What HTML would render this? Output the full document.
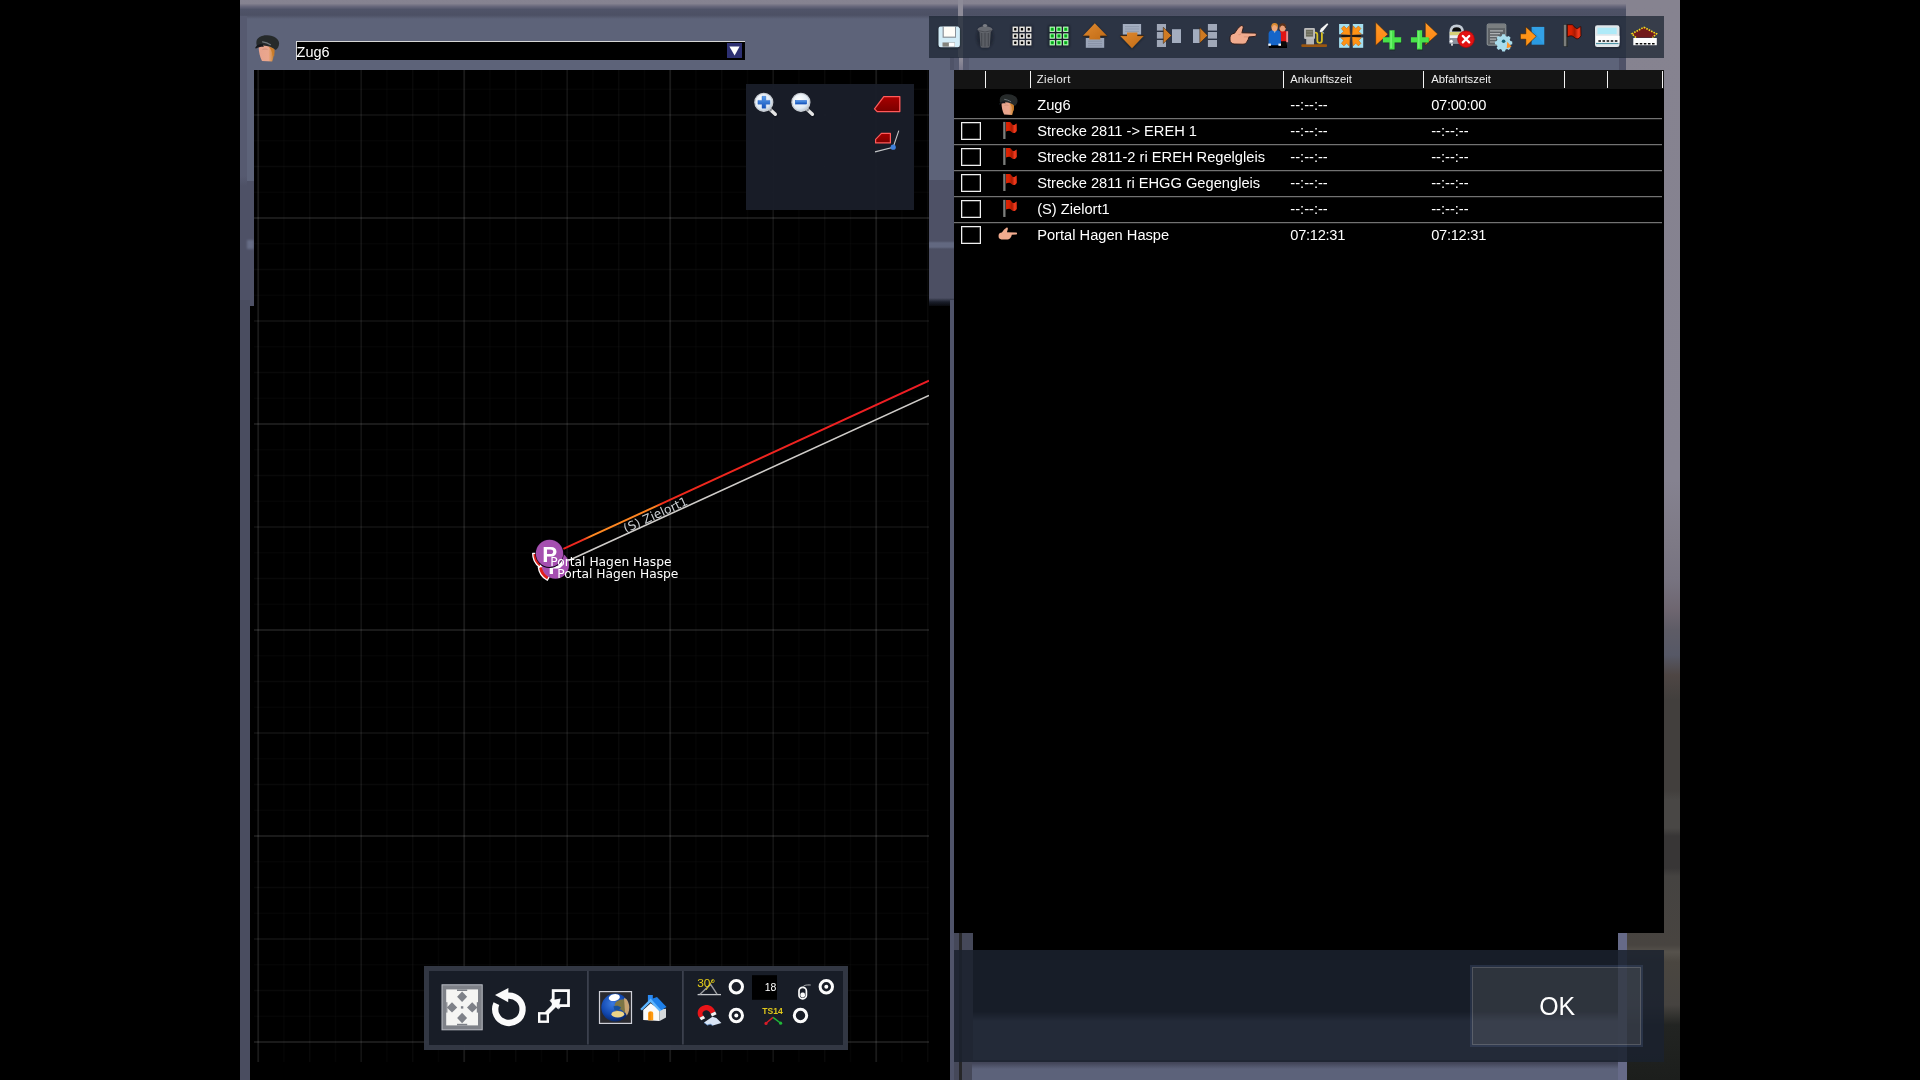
<!DOCTYPE html>
<html lang="de">
<head>
<meta charset="utf-8">
<title>Fahrplan - Zug6</title>
<style>
html,body{margin:0;padding:0;background:#000;}
body{width:1920px;height:1080px;position:relative;overflow:hidden;font-family:"Liberation Sans",sans-serif;color:#fff;}
.abs{position:absolute;}
.gl{will-change:transform;}
#scene{left:240px;top:0;width:1440px;height:1080px;background:linear-gradient(180deg,#868390 0px,#858290 480px,#7e7a86 540px,#777380 580px,#6e6670 610px,#5e5c66 630px,#565866 655px,#4e4644 675px,#423f3d 700px,#423f3d 790px,#494745 800px,#494745 828px,#383636 836px,#383636 868px,#454341 876px,#484440 945px,#56524c 952px,#4a4640 962px,#464340 1005px,#222422 1025px,#1c1e1c 1080px);}
#lwin{left:240px;top:0;width:714px;height:1080px;background:#5d6379;}
#rwin{left:954px;top:0;width:672px;height:1080px;background:#5d6379;}
.topband{left:0;top:0;width:100%;height:20px;background:linear-gradient(180deg,#868391 0px,#858290 3.500px,#67677b 6.500px,#4f5368 9.500px,#4c5064 15px,#5d6379 19px);}
#map{left:254px;top:70px;width:675px;height:992px;background:#000;overflow:hidden;}
#lblack{left:250px;top:306px;width:700px;height:774px;background:#000;}
#rstrip{left:950px;top:300px;width:4px;height:780px;background:#50546a;}
#table{left:954px;top:70px;width:710px;height:863px;background:#000;}
#table2{left:973px;top:933px;width:645px;height:88px;background:linear-gradient(180deg,#000 0,#000 78px,rgba(0,0,0,0) 88px);}
#thead{left:0;top:0;width:710px;height:18.600px;background:#141414;}
.sep{top:1px;width:1.600px;height:17px;background:#f4f4f4;}
.th{top:0;height:18.600px;line-height:19px;font-size:11.300px;color:#f0f0f0;white-space:nowrap;}
.row{left:0;width:708px;height:26px;line-height:26.400px;font-size:14.670px;white-space:nowrap;color:#fff;}
.row span{position:absolute;top:0;}
.rl{left:0;width:708px;height:2px;background:linear-gradient(180deg,#727272 0,#727272 1px,#1a1a1a 1px,#1a1a1a 2px);}
.cb{left:6.900px;width:20.200px;height:18.400px;box-sizing:border-box;border:1px solid #f0f0f0;box-shadow:inset 0 0 0 .5px rgba(240,240,240,.55);}
#toolbar{left:929px;top:16px;width:735px;height:41.500px;background:rgba(27,36,50,.74);}
#botbar{left:954px;top:950px;width:710px;height:112px;background:rgba(26,33,46,.87);}
#ok{left:1469.800px;top:964.800px;width:173.400px;height:81.600px;box-sizing:border-box;border:2px solid rgba(100,125,180,.2);background:rgba(255,255,255,.1);background-clip:padding-box;}
#ok i{position:absolute;left:0;top:0;right:0;bottom:0;border:1.200px solid rgba(255,255,255,.17);}
#ok b{position:absolute;left:-2px;top:-2px;width:173.400px;height:81.600px;line-height:82.500px;text-align:center;font-weight:normal;font-size:24.900px;color:#fff;text-indent:1px;}
#dd{left:295.500px;top:41px;width:448.800px;height:19px;background:#000;border-top:1px solid #d6d6d6;border-left:1px solid #d6d6d6;box-sizing:border-box;}
#dd span{position:absolute;left:-0.400px;top:0;line-height:20.200px;font-size:14.450px;color:#fff;}
#ddb{left:727px;top:43.300px;width:15px;height:14.700px;background:#2d3072;}
#btb{left:424px;top:966px;width:424px;height:84px;background:rgba(52,57,70,.96);}
#btb .in{left:5px;top:5px;width:414px;height:73.500px;background:#181d27;}
#zp{left:746px;top:84px;width:168px;height:126px;background:rgba(25,30,41,.94);}
</style>
</head>
<body>
<div id="scene" class="abs"></div>
<div id="lwin" class="abs"><div class="abs topband"></div></div>
<div id="rwin" class="abs"><div class="abs topband"></div></div>
<div class="abs" style="left:240px;top:16px;width:7px;height:1064px;background:linear-gradient(180deg,#565a70 0,#565a70 160px,#4e5166 170px)"></div>
<div class="abs" style="left:247px;top:181px;width:7px;height:130px;background:#4e5166"></div>
<div class="abs" style="left:247px;top:240px;width:7px;height:9px;background:#676d86;filter:blur(1px)"></div>
<div class="abs" style="left:240px;top:300px;width:10px;height:780px;background:#4a4d60"></div>
<div class="abs" style="left:929px;top:180px;width:25px;height:130px;background:linear-gradient(180deg,#4e5166 0,#4e5166 61px,#626880 63px,#626880 67px,#4c4f63 69px,#4c4f63 118px,#1a1e2a 122px,#000 128px)"></div>
<div class="abs" style="left:950px;top:57px;width:8px;height:13px;background:#4f5368"></div>
<div class="abs" style="left:958px;top:0;width:5px;height:70px;background:linear-gradient(180deg,#8d8b98 0,#8d8b98 60px,#77768a 70px)"></div>
<div class="abs" style="left:954px;top:57px;width:5px;height:13px;background:#565a70"></div>
<div class="abs" style="left:963px;top:57px;width:6px;height:13px;background:#565a70"></div>
<div class="abs" style="left:1619px;top:57px;width:7px;height:13px;background:#4f5268"></div>
<div class="abs" style="left:954px;top:930px;width:19px;height:150px;background:#454859"></div>
<div class="abs" style="left:959.300px;top:930px;width:3.100px;height:150px;background:#262628"></div>
<div class="abs" style="left:971.500px;top:1060px;width:647px;height:20px;background:linear-gradient(180deg,#434659 0,#434659 3px,#5c627a 9px)"></div>
<div class="abs" style="left:1618px;top:930px;width:9px;height:150px;background:#666a88"></div>

<div id="lblack" class="abs"></div>
<div id="rstrip" class="abs"></div>
<div id="map" class="abs"><svg class="abs" style="left:0;top:0" width="675" height="992" viewBox="0 0 675 992"><line x1="4.20" y1="0" x2="4.20" y2="992" stroke="#fff" stroke-opacity="0.1" stroke-width="1.8"/><line x1="29.95" y1="0" x2="29.95" y2="992" stroke="#fff" stroke-opacity="0.02" stroke-width="1.5"/><line x1="55.70" y1="0" x2="55.70" y2="992" stroke="#fff" stroke-opacity="0.036" stroke-width="1.5"/><line x1="81.45" y1="0" x2="81.45" y2="992" stroke="#fff" stroke-opacity="0.02" stroke-width="1.5"/><line x1="107.20" y1="0" x2="107.20" y2="992" stroke="#fff" stroke-opacity="0.075" stroke-width="1.7"/><line x1="132.95" y1="0" x2="132.95" y2="992" stroke="#fff" stroke-opacity="0.02" stroke-width="1.5"/><line x1="158.70" y1="0" x2="158.70" y2="992" stroke="#fff" stroke-opacity="0.036" stroke-width="1.5"/><line x1="184.45" y1="0" x2="184.45" y2="992" stroke="#fff" stroke-opacity="0.02" stroke-width="1.5"/><line x1="210.20" y1="0" x2="210.20" y2="992" stroke="#fff" stroke-opacity="0.1" stroke-width="1.8"/><line x1="235.95" y1="0" x2="235.95" y2="992" stroke="#fff" stroke-opacity="0.02" stroke-width="1.5"/><line x1="261.70" y1="0" x2="261.70" y2="992" stroke="#fff" stroke-opacity="0.036" stroke-width="1.5"/><line x1="287.45" y1="0" x2="287.45" y2="992" stroke="#fff" stroke-opacity="0.02" stroke-width="1.5"/><line x1="313.20" y1="0" x2="313.20" y2="992" stroke="#fff" stroke-opacity="0.075" stroke-width="1.7"/><line x1="338.95" y1="0" x2="338.95" y2="992" stroke="#fff" stroke-opacity="0.02" stroke-width="1.5"/><line x1="364.70" y1="0" x2="364.70" y2="992" stroke="#fff" stroke-opacity="0.036" stroke-width="1.5"/><line x1="390.45" y1="0" x2="390.45" y2="992" stroke="#fff" stroke-opacity="0.02" stroke-width="1.5"/><line x1="416.20" y1="0" x2="416.20" y2="992" stroke="#fff" stroke-opacity="0.1" stroke-width="1.8"/><line x1="441.95" y1="0" x2="441.95" y2="992" stroke="#fff" stroke-opacity="0.02" stroke-width="1.5"/><line x1="467.70" y1="0" x2="467.70" y2="992" stroke="#fff" stroke-opacity="0.036" stroke-width="1.5"/><line x1="493.45" y1="0" x2="493.45" y2="992" stroke="#fff" stroke-opacity="0.02" stroke-width="1.5"/><line x1="519.20" y1="0" x2="519.20" y2="992" stroke="#fff" stroke-opacity="0.075" stroke-width="1.7"/><line x1="544.95" y1="0" x2="544.95" y2="992" stroke="#fff" stroke-opacity="0.02" stroke-width="1.5"/><line x1="570.70" y1="0" x2="570.70" y2="992" stroke="#fff" stroke-opacity="0.036" stroke-width="1.5"/><line x1="596.45" y1="0" x2="596.45" y2="992" stroke="#fff" stroke-opacity="0.02" stroke-width="1.5"/><line x1="622.20" y1="0" x2="622.20" y2="992" stroke="#fff" stroke-opacity="0.1" stroke-width="1.8"/><line x1="647.95" y1="0" x2="647.95" y2="992" stroke="#fff" stroke-opacity="0.02" stroke-width="1.5"/><line x1="673.70" y1="0" x2="673.70" y2="992" stroke="#fff" stroke-opacity="0.036" stroke-width="1.5"/><line x1="0" y1="19.25" x2="675" y2="19.25" stroke="#fff" stroke-opacity="0.02" stroke-width="1.5"/><line x1="0" y1="45.00" x2="675" y2="45.00" stroke="#fff" stroke-opacity="0.075" stroke-width="1.7"/><line x1="0" y1="70.75" x2="675" y2="70.75" stroke="#fff" stroke-opacity="0.02" stroke-width="1.5"/><line x1="0" y1="96.50" x2="675" y2="96.50" stroke="#fff" stroke-opacity="0.036" stroke-width="1.5"/><line x1="0" y1="122.25" x2="675" y2="122.25" stroke="#fff" stroke-opacity="0.02" stroke-width="1.5"/><line x1="0" y1="148.00" x2="675" y2="148.00" stroke="#fff" stroke-opacity="0.1" stroke-width="1.8"/><line x1="0" y1="173.75" x2="675" y2="173.75" stroke="#fff" stroke-opacity="0.02" stroke-width="1.5"/><line x1="0" y1="199.50" x2="675" y2="199.50" stroke="#fff" stroke-opacity="0.036" stroke-width="1.5"/><line x1="0" y1="225.25" x2="675" y2="225.25" stroke="#fff" stroke-opacity="0.02" stroke-width="1.5"/><line x1="0" y1="251.00" x2="675" y2="251.00" stroke="#fff" stroke-opacity="0.075" stroke-width="1.7"/><line x1="0" y1="276.75" x2="675" y2="276.75" stroke="#fff" stroke-opacity="0.02" stroke-width="1.5"/><line x1="0" y1="302.50" x2="675" y2="302.50" stroke="#fff" stroke-opacity="0.036" stroke-width="1.5"/><line x1="0" y1="328.25" x2="675" y2="328.25" stroke="#fff" stroke-opacity="0.02" stroke-width="1.5"/><line x1="0" y1="354.00" x2="675" y2="354.00" stroke="#fff" stroke-opacity="0.1" stroke-width="1.8"/><line x1="0" y1="379.75" x2="675" y2="379.75" stroke="#fff" stroke-opacity="0.02" stroke-width="1.5"/><line x1="0" y1="405.50" x2="675" y2="405.50" stroke="#fff" stroke-opacity="0.036" stroke-width="1.5"/><line x1="0" y1="431.25" x2="675" y2="431.25" stroke="#fff" stroke-opacity="0.02" stroke-width="1.5"/><line x1="0" y1="457.00" x2="675" y2="457.00" stroke="#fff" stroke-opacity="0.075" stroke-width="1.7"/><line x1="0" y1="482.75" x2="675" y2="482.75" stroke="#fff" stroke-opacity="0.02" stroke-width="1.5"/><line x1="0" y1="508.50" x2="675" y2="508.50" stroke="#fff" stroke-opacity="0.036" stroke-width="1.5"/><line x1="0" y1="534.25" x2="675" y2="534.25" stroke="#fff" stroke-opacity="0.02" stroke-width="1.5"/><line x1="0" y1="560.00" x2="675" y2="560.00" stroke="#fff" stroke-opacity="0.1" stroke-width="1.8"/><line x1="0" y1="585.75" x2="675" y2="585.75" stroke="#fff" stroke-opacity="0.02" stroke-width="1.5"/><line x1="0" y1="611.50" x2="675" y2="611.50" stroke="#fff" stroke-opacity="0.036" stroke-width="1.5"/><line x1="0" y1="637.25" x2="675" y2="637.25" stroke="#fff" stroke-opacity="0.02" stroke-width="1.5"/><line x1="0" y1="663.00" x2="675" y2="663.00" stroke="#fff" stroke-opacity="0.075" stroke-width="1.7"/><line x1="0" y1="688.75" x2="675" y2="688.75" stroke="#fff" stroke-opacity="0.02" stroke-width="1.5"/><line x1="0" y1="714.50" x2="675" y2="714.50" stroke="#fff" stroke-opacity="0.036" stroke-width="1.5"/><line x1="0" y1="740.25" x2="675" y2="740.25" stroke="#fff" stroke-opacity="0.02" stroke-width="1.5"/><line x1="0" y1="766.00" x2="675" y2="766.00" stroke="#fff" stroke-opacity="0.1" stroke-width="1.8"/><line x1="0" y1="791.75" x2="675" y2="791.75" stroke="#fff" stroke-opacity="0.02" stroke-width="1.5"/><line x1="0" y1="817.50" x2="675" y2="817.50" stroke="#fff" stroke-opacity="0.036" stroke-width="1.5"/><line x1="0" y1="843.25" x2="675" y2="843.25" stroke="#fff" stroke-opacity="0.02" stroke-width="1.5"/><line x1="0" y1="869.00" x2="675" y2="869.00" stroke="#fff" stroke-opacity="0.075" stroke-width="1.7"/><line x1="0" y1="894.75" x2="675" y2="894.75" stroke="#fff" stroke-opacity="0.02" stroke-width="1.5"/><line x1="0" y1="920.50" x2="675" y2="920.50" stroke="#fff" stroke-opacity="0.036" stroke-width="1.5"/><line x1="0" y1="946.25" x2="675" y2="946.25" stroke="#fff" stroke-opacity="0.02" stroke-width="1.5"/><line x1="0" y1="972.00" x2="675" y2="972.00" stroke="#fff" stroke-opacity="0.1" stroke-width="1.8"/></svg></div>
<svg class="abs gl" style="left:254px;top:70px" width="675" height="992" viewBox="254 70 675 992">
<defs>
<linearGradient id="rl" gradientUnits="userSpaceOnUse" x1="563.4" y1="548.9" x2="929" y2="380.6">
<stop offset="0" stop-color="#ee1e1e"/><stop offset=".055" stop-color="#f03020"/><stop offset=".075" stop-color="#ff8a22"/><stop offset=".25" stop-color="#ff8220"/><stop offset=".272" stop-color="#f02a1c"/><stop offset="1" stop-color="#ee1c24"/>
</linearGradient>
</defs>
<path d="M561 564.100L929 395.400" stroke="#cfccc9" stroke-width="1.700" fill="none"/>
<path d="M563.400 548.900L929 380.600" stroke="url(#rl)" stroke-width="2" fill="none"/>
<!-- portal 2 (behind) -->
<path d="M538.29 566.90A17.2 17.2 0 0 0 547.33 580.29L549.53 576.14A12.5 12.5 0 0 1 542.97 566.41z" fill="#e0201c" stroke="#fff" stroke-width="1.300" stroke-linejoin="round"/>
<circle cx="555.400" cy="565.100" r="13.650" fill="#a54fb0"/>
<text x="548.200" y="573.500" font-family="'Liberation Sans',sans-serif" font-weight="bold" font-size="22.400px" fill="#fff">P</text>
<!-- portal 1 -->
<path d="M532.70 553.31A16.8 16.8 0 0 0 539.39 567.02L541.98 563.58A12.5 12.5 0 0 1 537.00 553.38z" fill="#e0201c" stroke="#fff" stroke-width="1.300" stroke-linejoin="round"/>
<circle cx="549.500" cy="553.600" r="14.300" fill="#0a0410"/>
<circle cx="549.500" cy="553.400" r="13.650" fill="#a54fb0"/>
<text x="542.300" y="562" font-family="'Liberation Sans',sans-serif" font-weight="bold" font-size="22.400px" fill="#fff">P</text>
<g font-family="'DejaVu Sans',sans-serif" font-size="12.250px" fill="#fff">
<text x="550.300" y="565.600">Portal Hagen Haspe</text>
<text x="557.200" y="577.500">Portal Hagen Haspe</text>
<text x="0" y="0" fill="#c9cdd1" transform="translate(625.800 533) rotate(-24.500)">(S) Zielort1</text>
</g>
</svg>

<div id="zp" class="abs"></div>
<svg class="abs" style="left:746px;top:84px" width="168" height="126" viewBox="746 84 168 126">
<defs>
<radialGradient id="lens" cx=".4" cy=".35" r=".7"><stop offset="0" stop-color="#fff"/><stop offset=".7" stop-color="#dfeaf4"/><stop offset="1" stop-color="#b8c4d0"/></radialGradient>
<linearGradient id="bl" x1="0" y1="0" x2="0" y2="1"><stop offset="0" stop-color="#5aa0ee"/><stop offset="1" stop-color="#1250b8"/></linearGradient>
<linearGradient id="rd" x1="0" y1="0" x2="0" y2="1"><stop offset="0" stop-color="#a80000"/><stop offset="1" stop-color="#7a0000"/></linearGradient>
</defs>
<g id="mag">
<path d="M769.500 109.500l6.500 6" stroke="#10141c" stroke-width="4.600" stroke-linecap="round" opacity=".5"/>
<path d="M769 108.500l6.300 5.800" stroke="#e4e4e4" stroke-width="3.400" stroke-linecap="round"/>
<path d="M769 108.500l2.500 2.300" stroke="#8a8e94" stroke-width="2.600"/>
<circle cx="763.800" cy="102.300" r="9" fill="url(#lens)" stroke="#c8ccd2" stroke-width="1.200"/>
</g>
<path d="M762 96.300h3.800v4.100h4.100v3.800h-4.100v4.100h-3.800v-4.100h-4.100v-3.800h4.100z" fill="url(#bl)" stroke="#1c58c0" stroke-width=".4"/>
<use href="#mag" transform="translate(37.100 0)"/>
<rect x="795.200" y="100.300" width="11.600" height="3.800" fill="url(#bl)" stroke="#1c58c0" stroke-width=".4"/>
<path d="M883.800 96.600h16v15h-22.600l-2.700-2.700z" fill="url(#rd)" stroke="#ff5a5a" stroke-width="1.300" stroke-linejoin="round"/>
<path d="M881.400 133.400h9v9.500h-14.800v-3.600z" fill="url(#rd)" stroke="#ff5a5a" stroke-width="1.200" stroke-linejoin="round"/>
<path d="M898.800 130.600l-5.600 16.600-18.200 4.700" stroke="#c4c6c8" stroke-width="1.100" fill="none"/>
<circle cx="893.200" cy="147.200" r="2.600" fill="#3f80dc"/>
</svg>

<div id="dd" class="abs gl"><span>Zug6</span></div>
<div id="ddb" class="abs"><svg width="15" height="15" viewBox="0 0 15 15" style="position:absolute;left:0;top:0"><path d="M2.400 3.600h10.200l-5 9z" fill="#fff"/></svg></div>
<svg class="abs" style="left:250px;top:30px" width="40" height="36" viewBox="250 30 40 36">
<defs>
<filter id="b1" x="-20%" y="-20%" width="140%" height="140%"><feGaussianBlur stdDeviation="0.55"/></filter>
<linearGradient id="face" x1="0" y1="0" x2="1" y2="0"><stop offset="0" stop-color="#e6a28c"/><stop offset=".62" stop-color="#eba78e"/><stop offset=".8" stop-color="#dc9858"/><stop offset="1" stop-color="#b87428"/></linearGradient>
</defs>
<g id="drv" filter="url(#b1)">
<path d="M258.600 46.400c.2 5.600 1.200 10.400 3.400 14.600l10.200.6c1.600-4.600 2.400-9.200 2.200-14.400-4.600-2.800-11.200-3.200-15.800-.8z" fill="url(#face)"/>
<path d="M268.600 46.400c3 .8 5.200 2.400 5.900 4.400l-.3 5.400-1.800-.6c.1-3.600-1.400-6.600-3.800-9.200z" fill="#c97c2a"/>
<path d="M262.500 49.600c1.600-.8 3.600-.8 5 0" stroke="#c88a74" stroke-width=".8" fill="none"/>
<path d="M256.400 41.800c.4-4.200 5.200-6.700 11-6.500 6.600.2 11.800 3.600 11.700 8.300 0 2.600-1.300 4.900-3.300 6.500-3.200-2.700-7.800-4.500-12.600-4.600-2.200 0-4.200.4-5.900 1.200-.8-1.500-1.100-3.200-.9-4.900z" fill="#262a2c"/>
<path d="M255.500 47.200c1.400-2 4-3.200 7-3.100l1.400 2.700c-2.800-.2-5.600.4-8 1.700-.6 0-.7-.7-.4-1.300z" fill="#15191b"/>
<path d="M262.600 41.800c2.800.4 5.400 1.300 7.800 2.900" stroke="#70777b" stroke-width="1.200" fill="none" stroke-linecap="round"/>
</g>
</svg>

<div id="table" class="abs gl">
<div id="thead" class="abs">
<div class="abs sep" style="left:30.800px"></div>
<div class="abs sep" style="left:75.800px"></div>
<div class="abs sep" style="left:328.700px"></div>
<div class="abs sep" style="left:468.500px"></div>
<div class="abs sep" style="left:609.900px"></div>
<div class="abs sep" style="left:652.600px"></div>
<div class="abs sep" style="left:707.700px"></div>
<div class="abs th" style="left:82.800px;letter-spacing:.36px">Zielort</div>
<div class="abs th" style="left:336.300px">Ankunftszeit</div>
<div class="abs th" style="left:477.200px">Abfahrtszeit</div>
</div>
<div class="abs row" style="top:22.4px"><span style="left:83.200px">Zug6</span><span style="left:336.300px">--:--:--</span><span style="left:477.200px;letter-spacing:-.28px">07:00:00</span></div>
<div class="abs row" style="top:48.4px"><span style="left:83.200px">Strecke 2811 -&gt; EREH 1</span><span style="left:336.300px">--:--:--</span><span style="left:477.200px">--:--:--</span></div>
<div class="abs rl" style="top:48px"></div>
<div class="abs cb" style="top:51.8px"></div>
<div class="abs row" style="top:74.4px"><span style="left:83.200px">Strecke 2811-2 ri EREH Regelgleis</span><span style="left:336.300px">--:--:--</span><span style="left:477.200px">--:--:--</span></div>
<div class="abs rl" style="top:74px"></div>
<div class="abs cb" style="top:77.8px"></div>
<div class="abs row" style="top:100.4px"><span style="left:83.200px">Strecke 2811 ri EHGG Gegengleis</span><span style="left:336.300px">--:--:--</span><span style="left:477.200px">--:--:--</span></div>
<div class="abs rl" style="top:100px"></div>
<div class="abs cb" style="top:103.8px"></div>
<div class="abs row" style="top:126.4px"><span style="left:83.200px">(S) Zielort1</span><span style="left:336.300px">--:--:--</span><span style="left:477.200px">--:--:--</span></div>
<div class="abs rl" style="top:126px"></div>
<div class="abs cb" style="top:129.8px"></div>
<div class="abs row" style="top:152.4px"><span style="left:83.200px">Portal Hagen Haspe</span><span style="left:336.300px;letter-spacing:-.28px">07:12:31</span><span style="left:477.200px;letter-spacing:-.28px">07:12:31</span></div>
<div class="abs rl" style="top:152px"></div>
<div class="abs cb" style="top:155.8px"></div>

</div>
<div id="table2" class="abs"></div>
<div id="toolbar" class="abs"></div>
<svg class="abs" style="left:998px;top:91.800px" width="28" height="28" viewBox="0 0 28 28">
<use href="#drv" transform="translate(1.200 2.300) scale(.785) translate(-255.700 -35.300)"/>
</svg>
<svg class="abs" style="left:996px;top:118px" width="30" height="130" viewBox="996 118 30 130">
<defs><g id="flg"><g transform="translate(1003.200 121.900) scale(.79) translate(-1563.700 -24.700)"><rect x="1563.700" y="24.700" width="2.500" height="21.600" fill="#7c7e7c"/><rect x="1566.200" y="24.700" width="1" height="21.600" fill="#4a4c4a"/><path d="M1567.300 24.700L1572.400 24.700C1574 25.500 1575 28.500 1576.800 28.600C1578.300 28.600 1579 27 1580.800 26.600L1581 35.800C1580 37.500 1578.500 39 1577 38.900C1575 38.800 1573.500 35.800 1571.200 35.800C1569.800 35.800 1568.500 36.300 1567.300 36.800Z" fill="url(#fg)"/></g></g></defs>
<use href="#flg" transform="translate(0 0)"/>
<use href="#flg" transform="translate(0 26)"/>
<use href="#flg" transform="translate(0 52)"/>
<use href="#flg" transform="translate(0 78)"/>
<g transform="translate(998.400 227.700) scale(.7 .64) translate(-1229.700 -25.700)"><path d="M1241.100 25.600C1242.600 25.200 1243.600 26.400 1243.200 27.800L1241.900 32.800L1255.200 33.100C1256.800 33.200 1256.800 36.300 1255.200 36.400L1248.800 36.900C1248.600 38.500 1248.200 40 1247.200 41.200C1246.400 43 1245 44.100 1243 44.200L1234 44C1231.500 43.600 1230 42 1230 40L1230 37C1230.400 35 1232 33.600 1234.600 33.200C1236.500 30.500 1238.500 27 1241.100 25.600Z" fill="#f1ab8e"/></g>
</svg>

<svg class="abs" style="left:929px;top:16px" width="735" height="42" viewBox="929 16 735 42">
<defs>
<linearGradient id="gOr" x1="0" y1="0" x2="1" y2="1"><stop offset="0" stop-color="#e08a30"/><stop offset="1" stop-color="#c06a14"/></linearGradient>
<linearGradient id="gOr2" x1="0" y1="0" x2="0" y2="1"><stop offset="0" stop-color="#ff9a28"/><stop offset="1" stop-color="#ff8410"/></linearGradient>
<filter id="sh" x="-20%" y="-20%" width="140%" height="150%"><feGaussianBlur stdDeviation="0.8"/></filter>
</defs>
<!-- 1 save -->
<g>
<rect x="938.5" y="27.6" width="21.5" height="20.4" rx="2.5" fill="#10141c" opacity=".7" filter="url(#sh)"/>
<path d="M940.5 26.6h17.6l1.8 1.8v16.6q0 2.2-2.2 2.2h-17q-2.2 0-2.2-2.2v-16.2q0-2.2 2-2.2z" fill="#d2ecf7"/>
<rect x="942.6" y="26.6" width="13.4" height="11.2" fill="#8c9299"/>
<rect x="943.8" y="26.8" width="11.2" height="9.8" fill="#fffdf8"/>
<rect x="942.4" y="42.4" width="12.6" height="4.2" fill="#9a9e9e"/>
<rect x="942.9" y="42.8" width="6" height="3.6" fill="#83837c"/>
<rect x="948.9" y="42.8" width="5.7" height="3.6" fill="#fff"/>
</g>
<!-- 2 trash -->
<g>
<ellipse cx="985" cy="37" rx="8.5" ry="12" fill="#161b25" opacity=".55" filter="url(#sh)"/>
<path d="M979.4 31.5h11.4l-1 14.6q-.1 1.6-1.8 1.6h-5.8q-1.7 0-1.8-1.6z" fill="#5b5e65"/>
<path d="M981.6 33v13M985 33v13.5M988.4 33v13" stroke="#484b52" stroke-width="1.2"/>
<ellipse cx="985" cy="29.6" rx="7.4" ry="3.4" fill="#676a71"/>
<path d="M978 30.5q7 3 14 0" stroke="#4a4d54" stroke-width="1" fill="none"/>
<ellipse cx="985" cy="25.6" rx="2.2" ry="1.6" fill="#7a7d84"/>
</g>
<!-- 3 grid --><g><rect x="1011.5" y="25.6" width="21" height="21" fill="#141820" opacity=".5" filter="url(#sh)"/><rect x="1012.6" y="26.6" width="5.3" height="5.3" fill="#f1efec"/><rect x="1013.5" y="27.5" width="3.5" height="3.5" fill="#d8d4ce"/><rect x="1014.10" y="28.10" width="2.3" height="2.3" rx=".6" fill="#050505"/><rect x="1019.4" y="26.6" width="5.3" height="5.3" fill="#f1efec"/><rect x="1020.2" y="27.5" width="3.5" height="3.5" fill="#d8d4ce"/><rect x="1020.85" y="28.10" width="2.3" height="2.3" rx=".6" fill="#050505"/><rect x="1026.1" y="26.6" width="5.3" height="5.3" fill="#f1efec"/><rect x="1027.0" y="27.5" width="3.5" height="3.5" fill="#d8d4ce"/><rect x="1027.60" y="28.10" width="2.3" height="2.3" rx=".6" fill="#050505"/><rect x="1012.6" y="33.4" width="5.3" height="5.3" fill="#f1efec"/><rect x="1013.5" y="34.2" width="3.5" height="3.5" fill="#d8d4ce"/><rect x="1014.10" y="34.85" width="2.3" height="2.3" rx=".6" fill="#050505"/><rect x="1019.4" y="33.4" width="5.3" height="5.3" fill="#f1efec"/><rect x="1020.2" y="34.2" width="3.5" height="3.5" fill="#d8d4ce"/><rect x="1020.85" y="34.85" width="2.3" height="2.3" rx=".6" fill="#050505"/><rect x="1026.1" y="33.4" width="5.3" height="5.3" fill="#f1efec"/><rect x="1027.0" y="34.2" width="3.5" height="3.5" fill="#d8d4ce"/><rect x="1027.60" y="34.85" width="2.3" height="2.3" rx=".6" fill="#050505"/><rect x="1012.6" y="40.1" width="5.3" height="5.3" fill="#f1efec"/><rect x="1013.5" y="41.0" width="3.5" height="3.5" fill="#d8d4ce"/><rect x="1014.10" y="41.60" width="2.3" height="2.3" rx=".6" fill="#050505"/><rect x="1019.4" y="40.1" width="5.3" height="5.3" fill="#f1efec"/><rect x="1020.2" y="41.0" width="3.5" height="3.5" fill="#d8d4ce"/><rect x="1020.85" y="41.60" width="2.3" height="2.3" rx=".6" fill="#050505"/><rect x="1026.1" y="40.1" width="5.3" height="5.3" fill="#f1efec"/><rect x="1027.0" y="41.0" width="3.5" height="3.5" fill="#d8d4ce"/><rect x="1027.60" y="41.60" width="2.3" height="2.3" rx=".6" fill="#050505"/></g>
<!-- 4 grid green --><g><rect x="1048.5" y="25.6" width="21" height="21" fill="#0a0e14" opacity=".6" filter="url(#sh)"/><rect x="1049.6" y="26.6" width="5.3" height="5.3" fill="#c8ffc8"/><rect x="1050.5" y="27.5" width="3.5" height="3.5" fill="#34e84a"/><rect x="1051.10" y="28.10" width="2.3" height="2.3" rx=".6" fill="#0c9a1c"/><rect x="1056.3" y="26.6" width="5.3" height="5.3" fill="#c8ffc8"/><rect x="1057.2" y="27.5" width="3.5" height="3.5" fill="#34e84a"/><rect x="1057.85" y="28.10" width="2.3" height="2.3" rx=".6" fill="#0c9a1c"/><rect x="1063.1" y="26.6" width="5.3" height="5.3" fill="#c8ffc8"/><rect x="1064.0" y="27.5" width="3.5" height="3.5" fill="#34e84a"/><rect x="1064.60" y="28.10" width="2.3" height="2.3" rx=".6" fill="#0c9a1c"/><rect x="1049.6" y="33.4" width="5.3" height="5.3" fill="#c8ffc8"/><rect x="1050.5" y="34.2" width="3.5" height="3.5" fill="#34e84a"/><rect x="1051.10" y="34.85" width="2.3" height="2.3" rx=".6" fill="#0c9a1c"/><rect x="1056.3" y="33.4" width="5.3" height="5.3" fill="#c8ffc8"/><rect x="1057.2" y="34.2" width="3.5" height="3.5" fill="#34e84a"/><rect x="1057.85" y="34.85" width="2.3" height="2.3" rx=".6" fill="#0c9a1c"/><rect x="1063.1" y="33.4" width="5.3" height="5.3" fill="#c8ffc8"/><rect x="1064.0" y="34.2" width="3.5" height="3.5" fill="#34e84a"/><rect x="1064.60" y="34.85" width="2.3" height="2.3" rx=".6" fill="#0c9a1c"/><rect x="1049.6" y="40.1" width="5.3" height="5.3" fill="#c8ffc8"/><rect x="1050.5" y="41.0" width="3.5" height="3.5" fill="#34e84a"/><rect x="1051.10" y="41.60" width="2.3" height="2.3" rx=".6" fill="#0c9a1c"/><rect x="1056.3" y="40.1" width="5.3" height="5.3" fill="#c8ffc8"/><rect x="1057.2" y="41.0" width="3.5" height="3.5" fill="#34e84a"/><rect x="1057.85" y="41.60" width="2.3" height="2.3" rx=".6" fill="#0c9a1c"/><rect x="1063.1" y="40.1" width="5.3" height="5.3" fill="#c8ffc8"/><rect x="1064.0" y="41.0" width="3.5" height="3.5" fill="#34e84a"/><rect x="1064.60" y="41.60" width="2.3" height="2.3" rx=".6" fill="#0c9a1c"/></g>
<!-- 5 up -->
<g>
<path d="M1083 37l11.7-13.6 12.3 13.6z" fill="#10141c" opacity=".6" filter="url(#sh)"/>
<rect x="1085.8" y="38" width="18.4" height="9.8" fill="#9ba5b8"/>
<path d="M1088 41.2h14M1088 43.6h14M1088 45.8h14" stroke="#8790a3" stroke-width=".9"/>
<path d="M1094.8 23.2l12.4 12.9h-6.9v3.5h-11v-3.5h-6.5z" fill="url(#gOr)"/>
<path d="M1082.8 36.1h6.5M1100.3 36.1h6.9" stroke="#3a2410" stroke-width=".9"/>
</g>
<!-- 6 down -->
<g>
<path d="M1120 36.5l12 12.6 12-12.6z" fill="#10141c" opacity=".6" filter="url(#sh)"/>
<rect x="1122.8" y="24" width="18.3" height="10.5" fill="#a3adbf"/>
<path d="M1125 26.6h14M1125 29h14M1125 31.4h14" stroke="#8f98ab" stroke-width=".9"/>
<path d="M1127 32.4h10.4v3.4h6.6l-12 12.4-12-12.4h7z" fill="url(#gOr)"/>
<path d="M1120 35.6h7M1137.4 35.6h6.6" stroke="#3a2410" stroke-width=".9"/>
</g>
<!-- 7 merge -->
<g>
<rect x="1156.9" y="24" width="9.1" height="6.6" fill="#a0a8b8"/>
<rect x="1156.9" y="32" width="9.1" height="6.6" fill="#a0a8b8"/>
<rect x="1156.9" y="40" width="9.1" height="7" fill="#a0a8b8"/>
<rect x="1172" y="29.2" width="9" height="13.8" fill="#a3adbf"/>
<path d="M1163.3 27.2l8.2 8.3-8.2 8z" fill="#cf7a22" stroke="#2a1c10" stroke-width=".5"/>
</g>
<!-- 8 split -->
<g>
<rect x="1193" y="29.2" width="7" height="13.8" fill="#a3adbf"/>
<rect x="1207.9" y="24" width="9.1" height="6.6" fill="#a0a8b8"/>
<rect x="1207.9" y="32" width="9.1" height="6.6" fill="#a0a8b8"/>
<rect x="1207.9" y="40" width="9.1" height="7" fill="#a0a8b8"/>
<path d="M1199.8 27.5l7.8 8-7.8 7.6z" fill="#cf7a22" stroke="#2a1c10" stroke-width=".5"/>
</g>
<!-- 9 hand -->
<g>
<path d="M1241.100 25.600C1242.600 25.200 1243.600 26.400 1243.200 27.800L1241.900 32.800L1255.200 33.100C1256.800 33.200 1256.800 36.300 1255.200 36.400L1248.800 36.900C1248.600 38.500 1248.200 40 1247.200 41.200C1246.400 43 1245 44.100 1243 44.200L1234 44C1231.500 43.600 1230 42 1230 40L1230 37C1230.400 35 1232 33.600 1234.600 33.200C1236.500 30.500 1238.500 27 1241.100 25.600Z" fill="#f1ab8e" stroke="#2a1614" stroke-width=".9" stroke-linejoin="round"/>
<path d="M1241.900 32.800c-.8 1.400-2 2-3.400 1.800M1248.800 36.900h-5" stroke="#cf8a6e" stroke-width=".7" fill="none"/>
</g>
<!-- 10 people -->
<g>
<rect x="1269" y="44.6" width="18" height="3.4" fill="#000"/>
<!-- red person -->
<rect x="1281" y="40" width="5.600" height="6.500" fill="#0a0a0a"/>
<path d="M1279.600 31.500q3-1.800 6.600 0l.8 9.800h-7.600z" fill="#e01414"/>
<rect x="1286.200" y="31.200" width="1.900" height="11" fill="#f08a8a"/>
<ellipse cx="1282.600" cy="27.800" rx="3.200" ry="3.700" fill="#eaa07a"/>
<path d="M1279.300 27.600q-.3-4.300 3.300-4.300 3.800 0 3.500 4.800l-1-.1q-.2-2.400-2.500-2.600-2.200.1-2.400 2.200z" fill="#5a3018"/>
<!-- blue person -->
<path d="M1268.600 45.200v-11.400q.3-3.200 3.800-3.500h4.600q3.600.3 3.900 3.500v11.400z" fill="#1565c9"/>
<path d="M1273.200 30.300l1.500 3 1.500-3z" fill="#9ab8d8"/>
<rect x="1268.300" y="43.600" width="2.600" height="2.200" fill="#f4f4f4"/>
<rect x="1278.400" y="43.600" width="2.600" height="2.200" fill="#f4f4f4"/>
<ellipse cx="1274.600" cy="27.600" rx="3.100" ry="3.700" fill="#f0a878"/>
<path d="M1271.300 27q-.2-3.900 3.300-3.900 3.700 0 3.300 4.200l-.9-.2q-.3-2-2.400-2.200-2.100.2-2.300 2.100z" fill="#d88a30"/>
</g>
<!-- 11 pump -->
<g>
<rect x="1301.300" y="44.200" width="25.700" height="2.800" rx="1" fill="#9a5610"/>
<rect x="1306.200" y="38.600" width="7.800" height="5.800" fill="#b4b4b4"/>
<rect x="1304.100" y="28" width="10.900" height="11" rx="1.200" fill="#bcbcbc"/>
<rect x="1305.900" y="29.800" width="7.200" height="6.800" fill="#6a6a5a"/>
<path d="M1306.500 31.800h6M1306.500 34.300h6" stroke="#8a8a78" stroke-width="1"/>
<path d="M1315 32.800c1.800-.4 2.300.5 2.300 2v5.700c0 3.200 4.600 3.200 4.600 0v-8.300" stroke="#d6be22" stroke-width="1.800" fill="none"/>
<path d="M1319.600 31.200l1.400-2.600 6.200-5.400 1.100 1-5 6.600-2.400 1.600z" fill="#f4f4f4"/>
<path d="M1322.500 31.500l1.200 2" stroke="#b8e0e8" stroke-width="1"/>
</g>
<!-- 12 four arrows -->
<g>
<rect x="1339.100" y="24" width="10.300" height="10.300" fill="#a4dff0"/>
<rect x="1352.800" y="24" width="10.400" height="10.300" fill="#a4dff0"/>
<rect x="1339.100" y="37.500" width="10.300" height="10.300" fill="#a4dff0"/>
<rect x="1352.800" y="37.500" width="10.400" height="10.300" fill="#a4dff0"/>
<g id="arr12"><path d="M1341.400 28.400l2.500-2.500 2.600 2.600 2.700-2.700 1 9.300-9.300-1 2.700-2.700z" fill="#ff9214" stroke="#c06008" stroke-width=".5"/></g>
<use href="#arr12" transform="translate(2702.300 0) scale(-1 1)"/>
<use href="#arr12" transform="translate(0 71.800) scale(1 -1)"/>
<use href="#arr12" transform="translate(2702.300 71.800) scale(-1 -1)"/>
<path d="M1341.500 35.900h8.800M1352 35.900h8.800" stroke="#140c04" stroke-width="1.500"/>
</g>
<!-- 13 triangle plus -->
<g>
<path d="M1375.700 22.300l12.300 12-12.300 11.200z" fill="url(#gOr2)" stroke="#3a2008" stroke-width=".5"/>
<path d="M1389.400 30.300h5.200v6.900h6.600v5.200h-6.600v7.100h-5.200v-7.100h-6.500v-5.200h6.500z" fill="#0c2a10" opacity=".55" transform="translate(.5 .9)"/>
<path d="M1389.400 30.300h5.200v6.900h6.600v5.200h-6.600v7.100h-5.200v-7.100h-6.500v-5.200h6.500z" fill="#48e24a"/>
<path d="M1390.200 31h1.800v17h-1.800z" fill="#7cf87c" opacity=".7"/>
</g>
<!-- 14 plus triangle -->
<g>
<path d="M1425.300 22.300l12.400 11.700-12.400 11.300z" fill="url(#gOr2)" stroke="#3a2008" stroke-width=".5"/>
<path d="M1417 30.300h5.200v6.900h6.600v5.200h-6.600v7.100h-5.200v-7.100h-6.100v-5.200h6.100z" fill="#0c2a10" opacity=".55" transform="translate(.5 .9)"/>
<path d="M1417 30.300h5.200v6.900h6.600v5.200h-6.600v7.100h-5.200v-7.100h-6.100v-5.200h6.100z" fill="#48e24a"/>
<path d="M1417.800 31h1.800v17h-1.800z" fill="#7cf87c" opacity=".7"/>
</g>
<!-- 15 train x -->
<g>
<path d="M1449.400 43.500v-11q0-7.900 7.300-7.900t7.300 7.900v11z" fill="#c2cad4"/>
<path d="M1452 31.500q.2-4.300 4.700-4.300t4.700 4.300z" fill="#0a0a0a"/>
<rect x="1449.800" y="32" width="14" height="3.400" fill="#d6d078"/>
<rect x="1449.800" y="35.400" width="14" height="2.600" fill="#eef0f4"/>
<rect x="1449.800" y="38" width="14" height="5.500" fill="#8a909c"/>
<circle cx="1451.300" cy="41.300" r="1.500" fill="#fff"/>
<rect x="1451" y="43.500" width="2" height="2.200" fill="#d0d0d0"/>
<circle cx="1466" cy="39.200" r="8.300" fill="#e41212"/>
<circle cx="1466" cy="39.200" r="8.300" fill="none" stroke="#b00a0a" stroke-width=".8"/>
<path d="M1462.800 36l6.400 6.400M1469.200 36l-6.400 6.400" stroke="#fff" stroke-width="2.300" stroke-linecap="round"/>
</g>
<!-- 16 doc gear -->
<g>
<rect x="1487.200" y="24" width="18.600" height="21.200" rx="1.200" fill="#5e6266" stroke="#9aa0a2" stroke-width=".9"/>
<rect x="1487.700" y="24.500" width="17.600" height="3.600" fill="#7a7e80"/>
<path d="M1490 30.800h13M1490 33.600h10M1490 36.400h8M1490 39.200h6M1490 42h5" stroke="#aeb2b4" stroke-width="1.200"/>
<g transform="translate(1503.600 41.200) scale(.9)">
<path d="M-1.500-7.700h3l.6 2 1.700.8 1.900-1 2.100 2.100-1 1.900.8 1.700 2 .6v3l-2 .6-.8 1.700 1 1.900-2.100 2.100-1.900-1-1.700.8-.6 2h-3l-.6-2-1.700-.8-1.900 1-2.100-2.100 1-1.900-.8-1.700-2-.6v-3l2-.6.8-1.700-1-1.900 2.100-2.100 1.900 1 1.700-.8z" fill="#a9dcec"/>
<circle r="2" fill="#1a6274"/>
</g>
<path d="M1507.300 41.800l4.300 5-4.900 1.500z" fill="#ff9428"/>
</g>
<!-- 17 arrow blue -->
<g>
<rect x="1531.600" y="26.900" width="12.600" height="17.800" fill="#2a9ae2"/>
<path d="M1531.600 26.900h12.600v17.800z" fill="#3aa6ea" opacity=".6"/>
<path d="M1520.400 33.800h5.400v-7l10.500 9.500-10.500 10.200v-7.300h-5.400z" fill="#ff9418" stroke="#2a1606" stroke-width=".5"/>
</g>
<!-- 18 flag -->
<g>
<defs><linearGradient id="fg" x1="0" y1="0" x2="1" y2="0"><stop offset="0" stop-color="#e02404"/><stop offset=".3" stop-color="#d82000"/><stop offset=".55" stop-color="#a81a02"/><stop offset=".8" stop-color="#f03a1e"/><stop offset="1" stop-color="#d83010"/></linearGradient></defs>
<g id="tflag">
<rect x="1563.200" y="24.300" width="4.800" height="22.400" rx=".8" fill="#141a1c" opacity=".8"/>
<rect x="1563.700" y="24.700" width="2.500" height="21.600" fill="#7c7e7c"/>
<rect x="1566.200" y="24.700" width="1.200" height="21.600" fill="#4a4c4a"/>
<path d="M1567.300 24.700L1572.400 24.700C1574 25.500 1575 28.500 1576.800 28.600C1578.300 28.600 1579 27 1580.800 26.600L1581 35.800C1580 37.500 1578.500 39 1577 38.900C1575 38.800 1573.500 35.800 1571.200 35.800C1569.800 35.800 1568.500 36.300 1567.300 36.800Z" fill="url(#fg)" stroke="#300400" stroke-width=".8"/>
</g>
</g>
<!-- 19 platform -->
<g>
<rect x="1595.400" y="26" width="24.500" height="21.700" rx="2" fill="#0c1018" opacity=".55" filter="url(#sh)"/>
<rect x="1595" y="25.200" width="24.500" height="21.700" rx="2.200" fill="#dfe6ea"/>
<rect x="1597.500" y="27.700" width="19.200" height="6.400" fill="#aeeaf8"/>
<rect x="1596" y="35.800" width="23.500" height="7" fill="#fdfdfd"/>
<path d="M1598.400 41h2.600M1602.500 41h2.600M1606.600 41h2.600M1610.700 41h2.600M1614.800 41h2.600" stroke="#0a0a0a" stroke-width="1.700"/>
<rect x="1596" y="42.900" width="22.500" height="1.200" fill="#4e94a4"/>
</g>
<!-- 20 building -->
<g>
<path d="M1643.900 27.200l12.600 6.600-4 3.800h-16.600l-4-3.800z" fill="#721a1a"/>
<path d="M1643.900 27.200l12.600 6.600-4 3.800M1635.900 37.600l-4-3.800 12-6.600" fill="none" stroke="#f2da1e" stroke-width="1.600" stroke-dasharray="1.600 1.100"/>
<rect x="1633.300" y="38" width="23.500" height="7.200" fill="#fdfdfd"/>
<path d="M1635.600 43.800h2.600M1639.700 43.800h2.600M1643.800 43.800h2.600M1647.900 43.800h2.600M1652 43.800h2.600" stroke="#0a0a0a" stroke-width="1.500"/>
</g>
</svg>

<div id="botbar" class="abs"></div>
<div id="ok" class="abs gl"><i></i><b>OK</b></div>
<div id="btb" class="abs"><div class="abs in"></div></div>
<svg class="abs gl" style="left:424px;top:966px" width="424" height="84" viewBox="424 966 424 84">
<defs>
<radialGradient id="globe" cx=".4" cy=".35" r=".75"><stop offset="0" stop-color="#3a7ae0"/><stop offset=".55" stop-color="#1248b0"/><stop offset="1" stop-color="#041a50"/></radialGradient>
<linearGradient id="roof" x1="0" y1="0" x2="0" y2="1"><stop offset="0" stop-color="#6ab8ff"/><stop offset="1" stop-color="#1c78e8"/></linearGradient>
<filter id="gb" x="-10%" y="-10%" width="120%" height="120%"><feGaussianBlur stdDeviation="0.7"/></filter>
</defs>
<rect x="587" y="971" width="1.800" height="73.500" fill="#3b404d"/>
<rect x="682" y="971" width="1.800" height="73.500" fill="#3b404d"/>
<!-- move -->
<rect x="442" y="984.800" width="40.200" height="45" fill="#7e8188" stroke="#b9bdc4" stroke-width="1"/>
<rect x="446.200" y="989.400" width="31.800" height="36" fill="#f5f5f3"/>
<g fill="#7e8188">
<path d="M462.100 991.500l5 5.200-5 5.200-5-5.200z"/>
<path d="M462.100 1012.800l5 5.200-5 5.200-5-5.200z"/>
<path d="M452 1002.200l5.200 5.200-5.200 5.200-5.200-5.200z"/>
<path d="M472.200 1002.200l5.200 5.200-5.200 5.200-5.200-5.200z"/>
<rect x="460.900" y="1006.200" width="2.400" height="2.400"/>
<rect x="457" y="989.400" width="10.200" height="1.600"/><rect x="457" y="1023.800" width="10.200" height="1.600"/>
<rect x="446.200" y="1002.200" width="1.200" height="10.400"/><rect x="476.800" y="1002.200" width="1.200" height="10.400"/>
</g>
<!-- rotate -->
<path d="M496.400 1003.600a13.700 13.700 0 1 0 11.300-8" fill="none" stroke="#fbfbfb" stroke-width="6.300"/>
<path d="M508.400 988l-.2 14.200-13.200-7.200z" fill="#fbfbfb"/>
<!-- scale -->
<rect x="553.200" y="990.600" width="15.300" height="15" fill="none" stroke="#fbfbfb" stroke-width="2.800"/>
<rect x="539.200" y="1013.300" width="8.600" height="8.400" fill="none" stroke="#fbfbfb" stroke-width="2.400"/>
<path d="M546.500 1013.500l9.500-9.500" stroke="#fbfbfb" stroke-width="4.200"/>
<path d="M560.600 998.400l-2.200 11.200-3.200-3.200-2.400-2.400-3.400-3.400z" fill="#fbfbfb"/>
<path d="M549.800 1000.200l3.600.6-.6-3.200z M558.800 1009.200l-.8-3.400 3.200.4z" fill="#fbfbfb"/>
<!-- globe -->
<rect x="599.500" y="991.600" width="32" height="31.800" fill="#2a2a2f" stroke="#cfd0d8" stroke-width="1.200"/>
<circle cx="615.300" cy="1007.600" r="14" fill="url(#globe)"/>
<clipPath id="gc"><circle cx="615.300" cy="1007.600" r="14"/></clipPath>
<g clip-path="url(#gc)" filter="url(#gb)">
<path d="M616 1002c3-2.500 8-3.500 12-2l3 10-6 3-4-3.500-5 1.500c-2-3-2-6.500 0-9z" fill="#7c7444"/>
<path d="M624 998l6 2 2 12-4 6-3-6z" fill="#c8a472"/>
<ellipse cx="617.800" cy="1014.200" rx="6.400" ry="3.300" fill="#ecd488"/>
<path d="M613.500 1006.500c2.500-1.200 5.500-.6 7.500 1l-2 2.800-4.500-.3z" fill="#14509c"/>
<ellipse cx="614.300" cy="997.600" rx="5.600" ry="3.400" fill="#fff" transform="rotate(-10 614.300 997.600)"/>
</g>
<!-- house -->
<path d="M643.200 1010l7.500-6.800 8.900 6.300v11.500l-16.400-1z" fill="#fbfbfb"/>
<path d="M659.600 1009.500l6.400-.8v8.800l-6.400 3.500z" fill="#d4d8da"/>
<path d="M647.900 995h4.900v6.500h-4.900z" fill="#2a8af4"/>
<path d="M650.700 999.300l6.300-2.300 9.500 10-5.600 3.600z" fill="#1e80ea"/>
<path d="M650.700 998.600l10.600 11.600-1.800 1.200-8.900-9.200-8.700 8.200-1.700-1.500z" fill="#5cb4ff"/>
<path d="M648.100 1020.200v-7.200q0-1.800 2.550-1.800t2.550 1.800v7.300z" fill="#ff9a10"/>
<rect x="649.200" y="1012" width="1.400" height="8.200" fill="#e07c00" opacity=".6"/>
<!-- 30deg -->
<path d="M697.600 994.600h23.400" stroke="#c6c8cc" stroke-width="1.300"/>
<path d="M700 994.200l10.600-9.800 6.400 9.800" stroke="#9a9ca0" stroke-width="1.400" fill="none"/>
<path d="M706 990l7-10.400" stroke="#d8c41c" stroke-width="1"/>
<text x="697.200" y="986.600" font-family="'Liberation Sans',sans-serif" font-size="11.500px" fill="#e4cc18" textLength="18" lengthAdjust="spacingAndGlyphs">30°</text>
<!-- radios -->
<g fill="none" stroke="#fbfbfb" stroke-width="3">
<circle cx="736.300" cy="986.700" r="6.200"/>
<circle cx="736.300" cy="1015.500" r="6.200"/>
<circle cx="826.300" cy="986.700" r="6.200"/>
<circle cx="800.500" cy="1015.500" r="6.200"/>
</g>
<circle cx="736.300" cy="1015.500" r="2" fill="#fff"/>
<circle cx="826.300" cy="986.700" r="2" fill="#fff"/>
<!-- 18 box -->
<rect x="752" y="975.200" width="25" height="24.600" fill="#000"/>
<text x="776.400" y="991.300" text-anchor="end" font-family="'Liberation Sans',sans-serif" font-size="10.500px" fill="#fff">18</text>
<!-- mouse -->
<rect x="799" y="987.400" width="7.400" height="11.400" rx="3.600" fill="none" stroke="#fbfbfb" stroke-width="1.700"/>
<rect x="800.400" y="992.600" width="4.600" height="4.800" rx="1.800" fill="#fbfbfb"/>
<path d="M802.700 987.400c.6-2.200 3.600-2.600 8-2.400" stroke="#b8babc" stroke-width="1" fill="none"/>
<!-- magnet -->
<path d="M704 1022.500l8.400-5.800 4 1.200 5 5.200-8.600 2.400-2.600-1.400-2.800 1z" fill="#d8e4f4"/>
<path d="M704 1022.500l3.400 2.600 2.800-1 2.600 1.400" stroke="#6a9ad8" stroke-width=".8" fill="none"/>
<path d="M699.400 1017.800c-3.800-5-1-11.400 5.200-12.600 5-.8 9 1.800 10.600 6.400l-4.600 2.200c-1-2.600-3-3.800-5.200-3.400-2.800.6-3.800 3.200-2 5.400z" fill="#e81418"/>
<path d="M710.600 1013.800l4.600-2.200 1.400 2.600-4.600 2.200zM699.400 1017.800l4-2 1.800 2.400-4 2z" fill="#f4f4f4"/>
<!-- TS14 -->
<text x="762.300" y="1014.400" font-family="'Liberation Sans',sans-serif" font-weight="bold" font-size="9.500px" fill="#e0c81a" textLength="20.500" lengthAdjust="spacingAndGlyphs">TS14</text>
<path d="M766 1023.200l7-5.800" stroke="#d81c28" stroke-width="1.400"/>
<path d="M773 1017.400l7.400 5.600" stroke="#20b838" stroke-width="1.400"/>
<circle cx="766" cy="1023.400" r="1.600" fill="#d81c28"/>
<circle cx="780.600" cy="1023.200" r="1.600" fill="#20b838"/>
</svg>

</body>
</html>
